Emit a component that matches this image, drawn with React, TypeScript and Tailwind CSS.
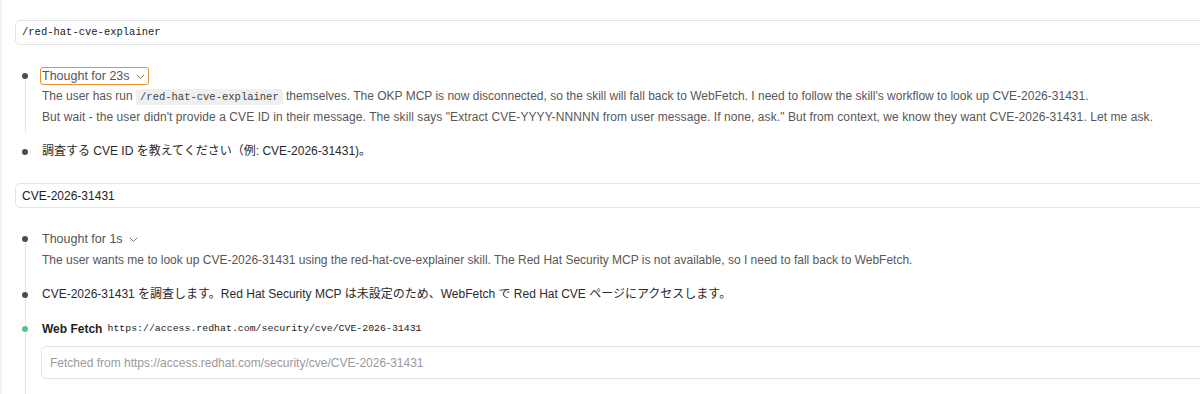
import React from "react";

const sans = "font-['Liberation_Sans','Noto_Sans_CJK_JP',sans-serif]";
const mono = "font-['Liberation_Mono','Noto_Sans_CJK_JP',monospace]";

function Chevron() {
  return (
    <svg width="9" height="6" viewBox="0 0 9 6" fill="none" className="ml-[6px] mt-[1px]">
      <path d="M1 1l3.5 3.5L8 1" stroke="#777" strokeWidth="1" strokeLinecap="round" strokeLinejoin="round" />
    </svg>
  );
}

function Dot({ green }: { green?: boolean }) {
  return (
    <span
      className={`absolute left-[22px] top-[7px] w-[6px] h-[6px] rounded-full ${green ? "bg-[#5cc08a]" : "bg-[#4d4d4d]"}`}
    />
  );
}

export default function App() {
  return (
    <div className={`w-[1200px] h-[394px] bg-white overflow-hidden relative ${sans} text-[12px]`}>
      <div className="absolute left-0 top-0 bottom-0 w-[2px] bg-[#f3f3f3]" />
      <div className="pt-[20px]">
        {/* user input 1 */}
        <div className="ml-[15px] mr-[-20px] h-[25px] border border-[#e4e4e4] rounded-[5px] flex items-center pl-[6px]">
          <span className={`${mono} text-[10.5px] text-[#222]`}>/red-hat-cve-explainer</span>
        </div>

        {/* group 1 */}
        <div className="mt-[21px]">
          <div className="relative pl-[40px]">
            <span className="absolute left-[25px] top-[10px] bottom-[-4px] w-px bg-[#e3e3e3]" />
            <Dot />
            <div className="h-[20px] flex items-center">
              <div className="h-[18px] flex items-center border-[1.5px] border-[#e89231] rounded-[3px] pl-[1px] pr-[3px]">
                <span className="text-[#555] text-[12.5px]">Thought for 23s</span>
                <Chevron />
              </div>
            </div>
            <div className="pl-[2px] text-[#575757] leading-[21px]">
              <div className="h-[21px] whitespace-nowrap">
                The user has run{" "}
                <code className={`${mono} text-[10.5px] leading-none bg-[#efefef] rounded-[3px] px-[4px] py-[2px] text-[#444]`}>
                  /red-hat-cve-explainer
                </code>{" "}
                themselves. The OKP MCP is now disconnected, so the skill will fall back to WebFetch. I need to follow
                the skill's workflow to look up CVE-2026-31431.
              </div>
              <div className="h-[21px] whitespace-nowrap tracking-[0.08px]">
                But wait - the user didn't provide a CVE ID in their message. The skill says "Extract CVE-YYYY-NNNNN from
                user message. If none, ask." But from context, we know they want CVE-2026-31431. Let me ask.
              </div>
            </div>
          </div>
          <div className="relative pl-[42px] mt-[14px] h-[20px] flex items-center text-[#2a2a2a]">
            <Dot />
            <span className="leading-[20px] -mt-[3px]">調査する CVE ID を教えてください（例: CVE-2026-31431)。</span>
          </div>
        </div>

        {/* user input 2 */}
        <div className="mt-[21px] ml-[15px] mr-[-20px] h-[25px] border border-[#e4e4e4] rounded-[5px] flex items-center pl-[6px]">
          <span className="text-[#222] text-[12px]">CVE-2026-31431</span>
        </div>

        {/* group 2 */}
        <div className="relative mt-[21px]">
          <span className="absolute left-[25px] top-[10px] bottom-[-40px] w-px bg-[#e3e3e3]" />
          <div className="relative pl-[42px]">
            <Dot />
            <div className="h-[20px] flex items-center text-[#555] text-[12.5px]">
              <span>Thought for 1s</span>
              <Chevron />
            </div>
            <div className="mt-[1px] h-[21px] whitespace-nowrap text-[#575757] leading-[21px]">
              The user wants me to look up CVE-2026-31431 using the red-hat-cve-explainer skill. The Red Hat Security MCP
              is not available, so I need to fall back to WebFetch.
            </div>
          </div>
          <div className="relative pl-[42px] mt-[14px] h-[20px] flex items-center text-[#2a2a2a]">
            <Dot />
            <span className="leading-[20px] -mt-[3px]">CVE-2026-31431 を調査します。Red Hat Security MCP は未設定のため、WebFetch で Red Hat CVE ページにアクセスします。</span>
          </div>
          <div className="relative pl-[42px] mt-[14px] h-[20px] flex items-center text-[#1f1f1f]">
            <Dot green />
            <span className="font-bold">Web Fetch</span>
            <span className={`${mono} text-[9.9px] ml-[5px] text-[#222]`}>
              https://access.redhat.com/security/cve/CVE-2026-31431
            </span>
          </div>
          <div className="ml-[41px] mr-[-20px] mt-[7px] h-[33px] border border-[#e4e4e4] rounded-[5px] flex items-center pl-[8px] text-[#9a9a9a]">
            Fetched from https://access.redhat.com/security/cve/CVE-2026-31431
          </div>
        </div>
      </div>
    </div>
  );
}
